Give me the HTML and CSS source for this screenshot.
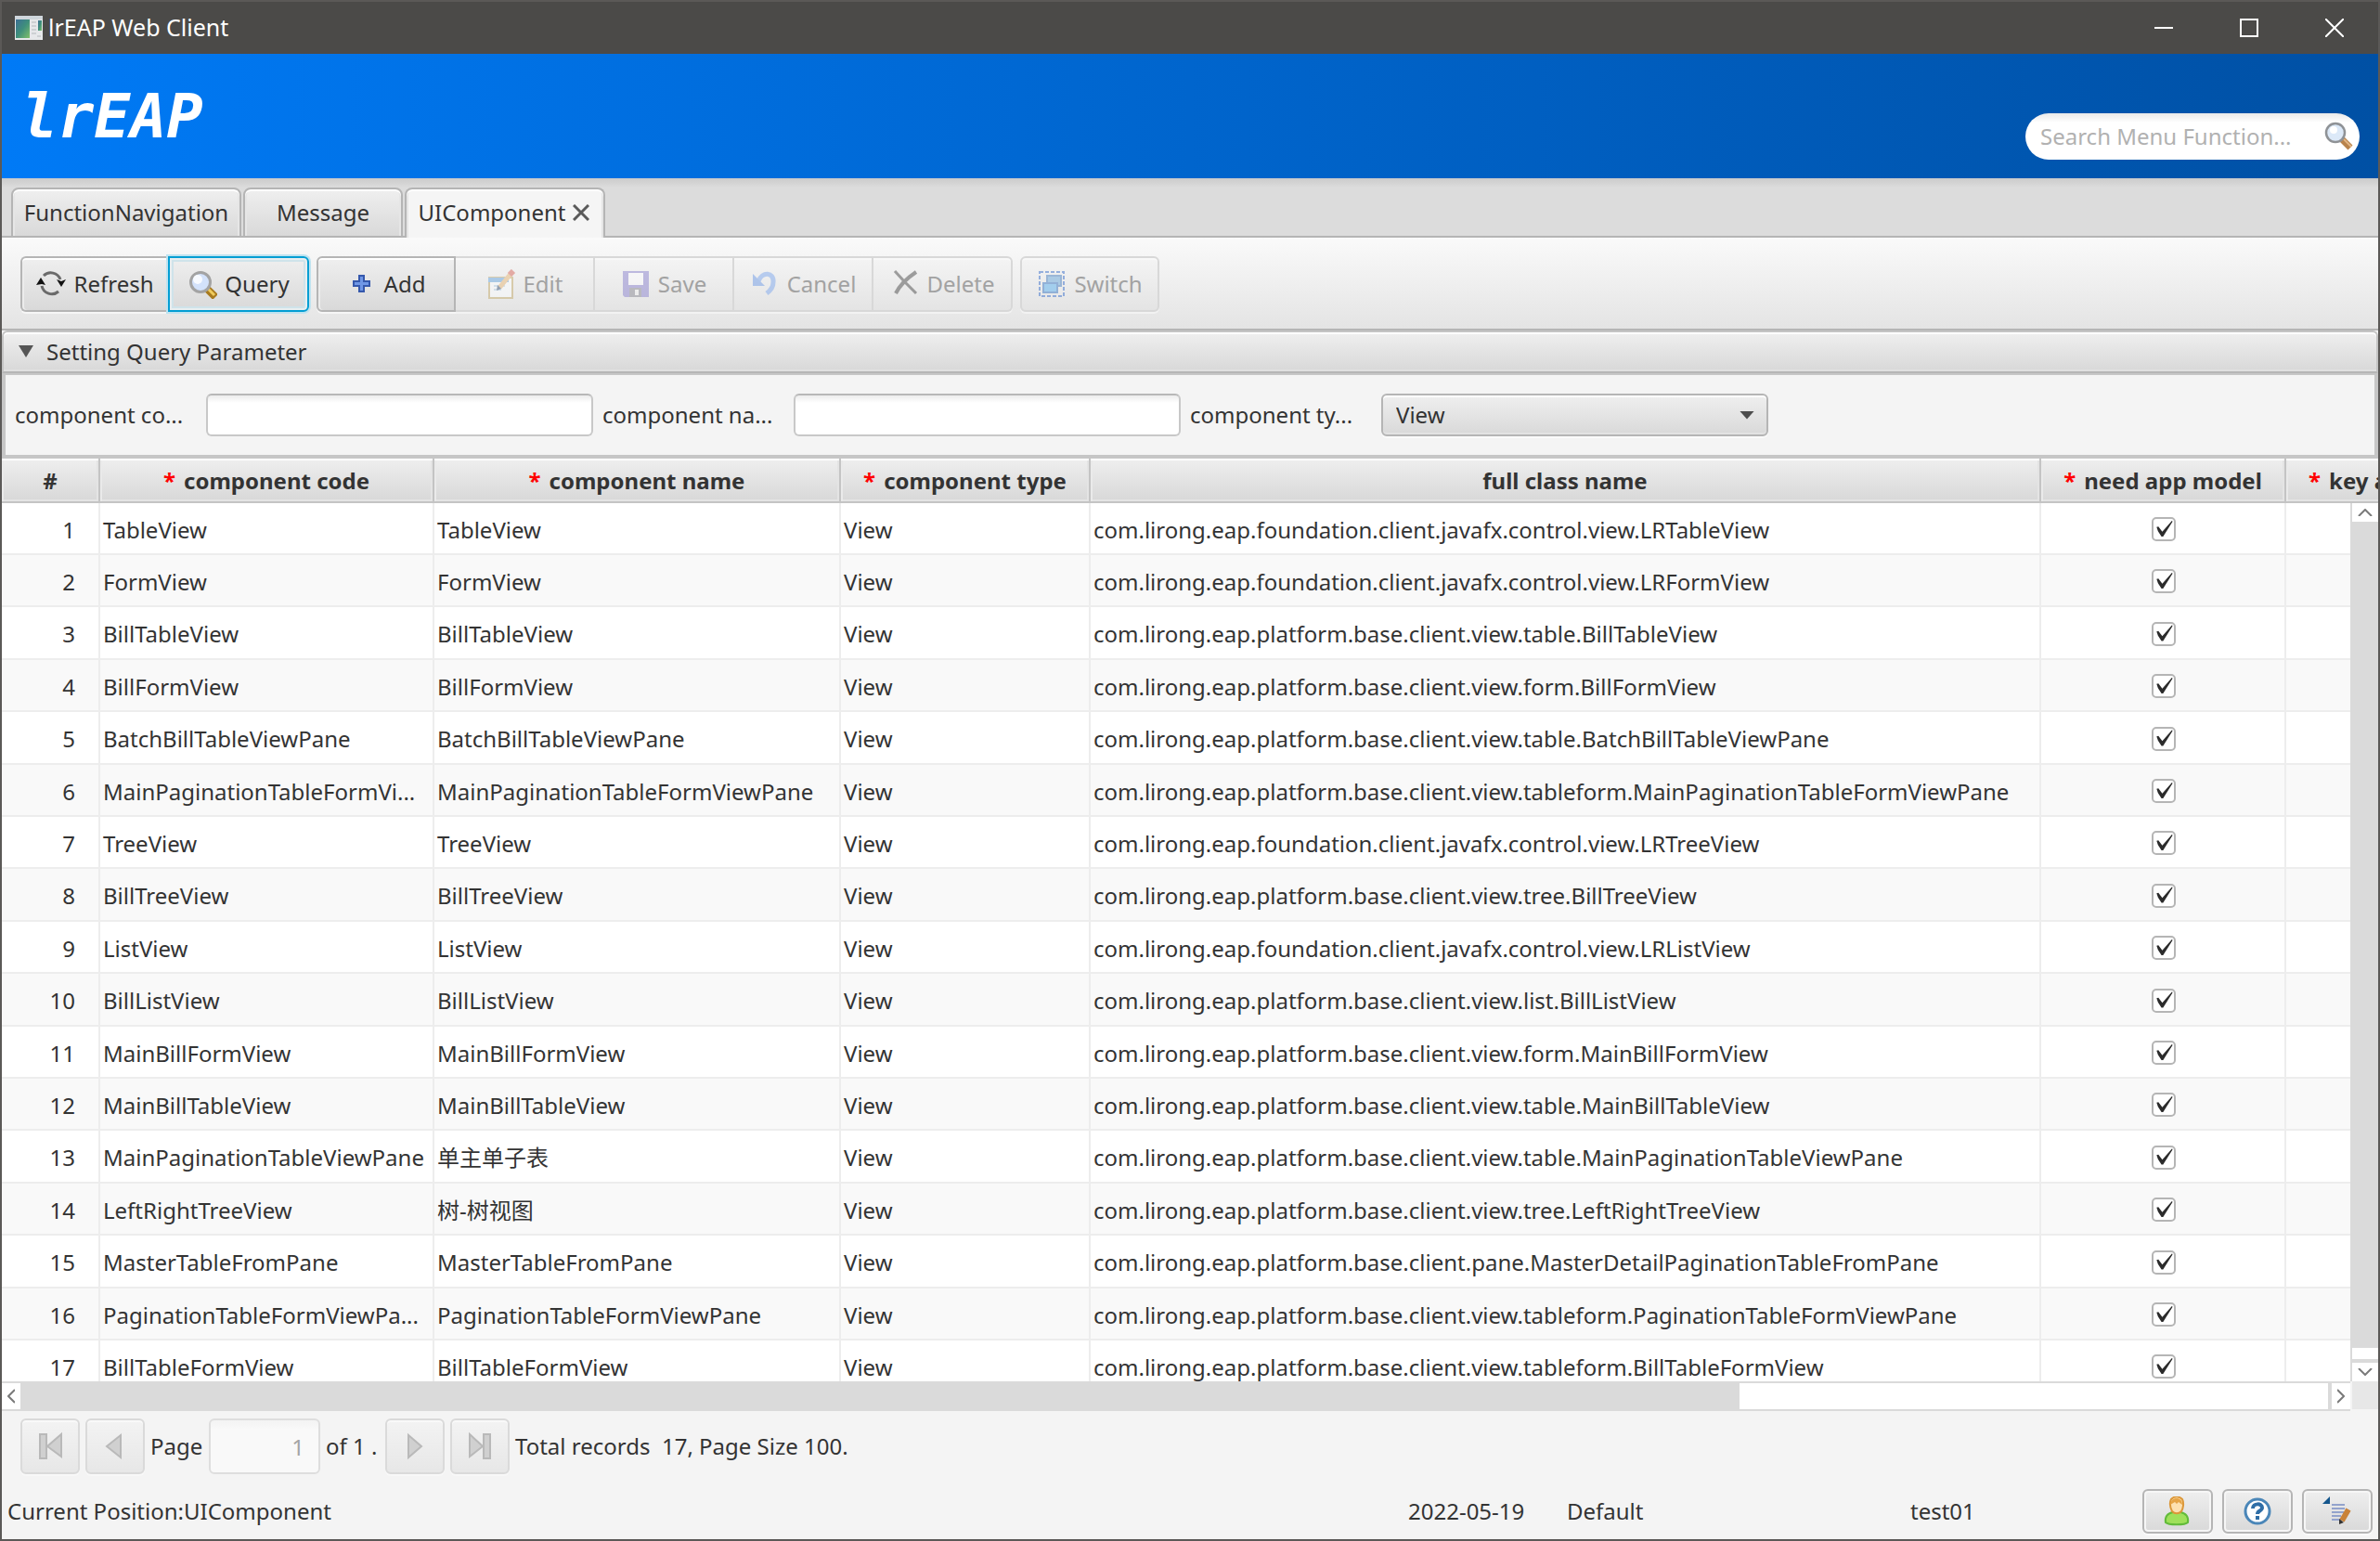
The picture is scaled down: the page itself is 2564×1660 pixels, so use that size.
FILE: index.html
```html
<!DOCTYPE html>
<html lang="en">
<head>
<meta charset="utf-8">
<title>lrEAP Web Client</title>
<link rel="stylesheet" href="styles.css">
</head>
<body>
<div class="window">
  <header class="titlebar">
    <svg class="app-icon" viewBox="0 0 30 26" aria-hidden="true">
      <defs><linearGradient id="g-app" x1="0" y1="0" x2="1" y2="1"><stop offset="0" stop-color="#3c6f96"/><stop offset=".5" stop-color="#3f8f7c"/><stop offset="1" stop-color="#7fc06a"/></linearGradient></defs>
      <rect width="30" height="26" fill="#e6e8ea"/><rect x="0" y="0" width="30" height="4" fill="#cfd6dc"/>
      <rect x="1" y="4" width="15" height="20" fill="url(#g-app)"/>
      <path d="M18 7h5M18 11h5M18 15h5M18 19h5M24 22h4" stroke="#b4b8bc" stroke-width="1"/>
      <rect x="25" y="5" width="4" height="11" fill="url(#g-app)"/>
    </svg>
    <h1 class="titlebar-text">lrEAP Web Client</h1>
    <button class="win-btn" aria-label="Minimize"><svg viewBox="0 0 20 20"><path d="M0 10h20" /></svg></button>
    <button class="win-btn" aria-label="Maximize"><svg viewBox="0 0 20 20"><path d="M1 1h18v18H1z"/></svg></button>
    <button class="win-btn" aria-label="Close"><svg viewBox="0 0 20 20"><path d="M0 0l20 20M20 0L0 20"/></svg></button>
  </header>

  <div class="banner">
    <div class="brand">lrEAP</div>
    <div class="search">
      <input type="text" aria-label="Search Menu Function" placeholder="Search Menu Function...">
      <svg viewBox="0 0 32 32" aria-hidden="true">
        <path d="M19 19l9 9" stroke="#b8834c" stroke-width="7"/><path d="M21 19l8 8" stroke="#e0b483" stroke-width="2"/>
        <circle cx="12" cy="12" r="10" fill="#dce9f8" stroke="#8f9296" stroke-width="2.500"/><circle cx="10" cy="9" r="4" fill="#fff"/>
      </svg>
    </div>
  </div>

  <nav class="tabs" role="tablist">
    <button class="tab tab-nav" role="tab">FunctionNavigation</button>
    <button class="tab tab-msg" role="tab">Message</button>
    <button class="tab tab-ui selected" role="tab" aria-selected="true">UIComponent<svg viewBox="0 0 18 18" aria-hidden="true"><path d="M1 1l16 16M17 1L1 17"/></svg></button>
  </nav>

  <div class="toolbar" role="toolbar">
    <div class="btn-group">
      <button class="tool first refresh"><svg class="ico" viewBox="0 0 32 32" aria-hidden="true"><path d="M8 7A11 11 0 0 1 26 11" fill="none" stroke="#6a6a6a" stroke-width="3"/><path d="M24 24A11 11 0 0 1 6 18" fill="none" stroke="#6a6a6a" stroke-width="3"/><path d="M0 17L5 9l5 8-4-1z" fill="#111"/><path d="M22 11l5 2 5-2-5 8z" fill="#111"/></svg>Refresh</button>
      <button class="tool last query focused"><svg class="ico" viewBox="0 0 32 32" aria-hidden="true"><path d="M21 21l9 9" stroke="#a87a1e" stroke-width="8"/><path d="M22 21l7 7" stroke="#f0cc5c" stroke-width="3"/><circle cx="14" cy="14" r="10.500" fill="#d3e2fb" stroke="#a3a3a3" stroke-width="3"/><circle cx="11" cy="11" r="5" fill="#f7faff"/></svg>Query</button>
    </div>
    <div class="btn-group">
      <button class="tool first"><svg class="ico" viewBox="0 0 32 32" aria-hidden="true"><path d="M13 7h5v6h6v5h-6v6h-5v-6H7v-5h6z" fill="#6f97e6" stroke="#3558ac" stroke-width="2"/></svg>Add</button>
      <button class="tool" disabled><svg class="ico" viewBox="0 0 32 32" aria-hidden="true"><rect x="3" y="9" width="25" height="22" fill="#fbfdff" stroke="#c4ab6c" stroke-width="2"/><path d="M2 9h22v5H2z" fill="#6aa6e0"/><path d="M8 18h12M8 22h8" stroke="#b9d3ea" stroke-width="2"/><path d="M14 20L27 4" stroke="#e8b878" stroke-width="5"/><path d="M25 6l4-4" stroke="#d8685c" stroke-width="6"/><path d="M11 23l1-6 4 4z" fill="#3b5578"/></svg>Edit</button>
      <button class="tool" disabled><svg class="ico" viewBox="0 0 32 32" aria-hidden="true"><path d="M2 2h28v28H4l-2-2z" fill="#8c84d0"/><rect x="8" y="4" width="16" height="13" fill="#fdfdff"/><rect x="9" y="20" width="13" height="10" fill="#8a8a94"/><rect x="15" y="22" width="4" height="6" fill="#f0f0f0"/></svg>Save</button>
      <button class="tool" disabled><svg class="ico" viewBox="0 0 32 32" aria-hidden="true"><path d="M9 13c4-11 17-10 16 1 0 6-3 9-7 12" fill="none" stroke="#7fa9ee" stroke-width="5"/><path d="M3 5v13h13z" fill="#6f9ce8"/></svg>Cancel</button>
      <button class="tool last" disabled><svg class="ico" viewBox="0 0 32 32" aria-hidden="true"><path d="M5 2l10 11 2 2 11 11" fill="none" stroke="#4c4c4c" stroke-width="3"/><path d="M28 3C19 9 10 18 6 26" fill="none" stroke="#4c4c4c" stroke-width="4"/></svg>Delete</button>
    </div>
    <div class="btn-group">
      <button class="tool first last" disabled><svg class="ico" viewBox="0 0 32 32" aria-hidden="true"><rect x="3" y="3" width="26" height="26" fill="none" stroke="#3c70cc" stroke-width="2" stroke-dasharray="4 2"/><rect x="11" y="7" width="15" height="11" fill="#6aa8dc" stroke="#4a80c0" stroke-width="2"/><rect x="7" y="15" width="15" height="10" fill="#5cb2f0" stroke="#3c78c4" stroke-width="2"/></svg>Switch</button>
    </div>
  </div>

  <section class="params">
    <h2 class="params-title"><svg viewBox="0 0 16 14" aria-hidden="true"><path d="M0 0h16L8 13z"/></svg>Setting Query Parameter</h2>
    <form class="params-body">
      <label for="p-code">component co...</label><input id="p-code" type="text">
      <label for="p-name">component na...</label><input id="p-name" type="text">
      <label for="p-type">component ty...</label><span class="combo"><select id="p-type"><option>View</option></select></span>
    </form>
  </section>

  <main class="datagrid">
    <div class="viewport">
      <table>
        <colgroup><col class="c-num"><col class="c-code"><col class="c-name"><col class="c-type"><col class="c-class"><col class="c-need"><col class="c-key"></colgroup>
        <thead>
          <tr><th>#</th><th><i>*</i>component code</th><th><i>*</i>component name</th><th><i>*</i>component type</th><th>full class name</th><th><i>*</i>need app model</th><th class="start"><i>*</i>key a</th></tr>
        </thead>
        <tbody>
          <tr><td>1</td><td>TableView</td><td>TableView</td><td>View</td><td>com.lirong.eap.foundation.client.javafx.control.view.LRTableView</td><td><input type="checkbox" checked aria-label="need app model, row 1"></td><td></td></tr>
          <tr><td>2</td><td>FormView</td><td>FormView</td><td>View</td><td>com.lirong.eap.foundation.client.javafx.control.view.LRFormView</td><td><input type="checkbox" checked aria-label="need app model, row 2"></td><td></td></tr>
          <tr><td>3</td><td>BillTableView</td><td>BillTableView</td><td>View</td><td>com.lirong.eap.platform.base.client.view.table.BillTableView</td><td><input type="checkbox" checked aria-label="need app model, row 3"></td><td></td></tr>
          <tr><td>4</td><td>BillFormView</td><td>BillFormView</td><td>View</td><td>com.lirong.eap.platform.base.client.view.form.BillFormView</td><td><input type="checkbox" checked aria-label="need app model, row 4"></td><td></td></tr>
          <tr><td>5</td><td>BatchBillTableViewPane</td><td>BatchBillTableViewPane</td><td>View</td><td>com.lirong.eap.platform.base.client.view.table.BatchBillTableViewPane</td><td><input type="checkbox" checked aria-label="need app model, row 5"></td><td></td></tr>
          <tr><td>6</td><td>MainPaginationTableFormVi...</td><td>MainPaginationTableFormViewPane</td><td>View</td><td>com.lirong.eap.platform.base.client.view.tableform.MainPaginationTableFormViewPane</td><td><input type="checkbox" checked aria-label="need app model, row 6"></td><td></td></tr>
          <tr><td>7</td><td>TreeView</td><td>TreeView</td><td>View</td><td>com.lirong.eap.foundation.client.javafx.control.view.LRTreeView</td><td><input type="checkbox" checked aria-label="need app model, row 7"></td><td></td></tr>
          <tr><td>8</td><td>BillTreeView</td><td>BillTreeView</td><td>View</td><td>com.lirong.eap.platform.base.client.view.tree.BillTreeView</td><td><input type="checkbox" checked aria-label="need app model, row 8"></td><td></td></tr>
          <tr><td>9</td><td>ListView</td><td>ListView</td><td>View</td><td>com.lirong.eap.foundation.client.javafx.control.view.LRListView</td><td><input type="checkbox" checked aria-label="need app model, row 9"></td><td></td></tr>
          <tr><td>10</td><td>BillListView</td><td>BillListView</td><td>View</td><td>com.lirong.eap.platform.base.client.view.list.BillListView</td><td><input type="checkbox" checked aria-label="need app model, row 10"></td><td></td></tr>
          <tr><td>11</td><td>MainBillFormView</td><td>MainBillFormView</td><td>View</td><td>com.lirong.eap.platform.base.client.view.form.MainBillFormView</td><td><input type="checkbox" checked aria-label="need app model, row 11"></td><td></td></tr>
          <tr><td>12</td><td>MainBillTableView</td><td>MainBillTableView</td><td>View</td><td>com.lirong.eap.platform.base.client.view.table.MainBillTableView</td><td><input type="checkbox" checked aria-label="need app model, row 12"></td><td></td></tr>
          <tr><td>13</td><td>MainPaginationTableViewPane</td><td lang="zh">单主单子表</td><td>View</td><td>com.lirong.eap.platform.base.client.view.table.MainPaginationTableViewPane</td><td><input type="checkbox" checked aria-label="need app model, row 13"></td><td></td></tr>
          <tr><td>14</td><td>LeftRightTreeView</td><td lang="zh">树-树视图</td><td>View</td><td>com.lirong.eap.platform.base.client.view.tree.LeftRightTreeView</td><td><input type="checkbox" checked aria-label="need app model, row 14"></td><td></td></tr>
          <tr><td>15</td><td>MasterTableFromPane</td><td>MasterTableFromPane</td><td>View</td><td>com.lirong.eap.platform.base.client.pane.MasterDetailPaginationTableFromPane</td><td><input type="checkbox" checked aria-label="need app model, row 15"></td><td></td></tr>
          <tr><td>16</td><td>PaginationTableFormViewPa...</td><td>PaginationTableFormViewPane</td><td>View</td><td>com.lirong.eap.platform.base.client.view.tableform.PaginationTableFormViewPane</td><td><input type="checkbox" checked aria-label="need app model, row 16"></td><td></td></tr>
          <tr><td>17</td><td>BillTableFormView</td><td>BillTableFormView</td><td>View</td><td>com.lirong.eap.platform.base.client.view.tableform.BillTableFormView</td><td><input type="checkbox" checked aria-label="need app model, row 17"></td><td></td></tr>
        </tbody>
      </table>
    </div>
    <div class="vbar">
      <button aria-label="Scroll up"><svg viewBox="0 0 16 8"><path d="M1 8l7-7 7 7"/></svg></button>
      <div class="vthumb"></div><div class="vtrack"></div>
      <button aria-label="Scroll down"><svg viewBox="0 0 16 8"><path d="M1 0l7 7 7-7"/></svg></button>
    </div>
    <div class="hbar">
      <button aria-label="Scroll left"><svg viewBox="0 0 8 16"><path d="M8 1L1 8l7 7"/></svg></button>
      <div class="hthumb"></div><div class="htrack"></div>
      <button aria-label="Scroll right"><svg viewBox="0 0 8 16"><path d="M0 1l7 7-7 7"/></svg></button>
    </div>
    <div class="corner"></div>
  </main>

  <div class="pager">
    <button class="page-btn" disabled aria-label="First page"><svg class="ico" viewBox="0 0 32 32"><path d="M5 3h7v26H5zM28 3v24L13 16z"/></svg></button>
    <button class="page-btn" disabled aria-label="Previous page"><svg class="ico" viewBox="0 0 32 32"><path d="M22 4v24L7 16z"/></svg></button>
    <label class="page-label" for="page">Page</label>
    <input id="page" type="text" value="1" disabled>
    <span class="page-count">of 1 .</span>
    <button class="page-btn" disabled aria-label="Next page"><svg class="ico" viewBox="0 0 32 32"><path d="M9 4v24l14-12z"/></svg></button>
    <button class="page-btn" disabled aria-label="Last page"><svg class="ico" viewBox="0 0 32 32"><path d="M20 3h7v26h-7zM5 3v24l14-11z"/></svg></button>
    <span class="totals">Total records&nbsp; 17, Page Size 100.</span>
  </div>

  <footer class="status">
    <span class="position">Current Position:UIComponent</span>
    <span class="date">2022-05-19</span>
    <span class="org">Default</span>
    <span class="user">test01</span>
    <div class="status-btns">
      <button aria-label="User"><svg class="ico" viewBox="0 0 32 32"><path d="M3 28c-1-6 2-10 8-11h8c6 1 9 5 8 11-3 3-21 3-24 0z" fill="#9fe05a" stroke="#62bb3a" stroke-width="2"/><path d="M9 3c4-4 9-3 12 0 2 4 1 10-1 13-3 3-7 3-10 0-2-4-3-9-1-13z" fill="#fde0b0" stroke="#dc9738" stroke-width="2"/><path d="M8 9c1-6 4-7 7-7s6 2 6 7l-4-3-2 2-2-2z" fill="#e6a446"/></svg></button>
      <button aria-label="Help"><svg class="ico" viewBox="0 0 32 32"><circle cx="16" cy="16" r="13" fill="#fff" stroke="#4a86b8" stroke-width="3"/><path d="M11 13c0-6 10-6 10-1 0 4-5 3-5 7" fill="none" stroke="#2f6ea6" stroke-width="4"/><rect x="14" y="21" width="4" height="4" fill="#2f6ea6"/></svg></button>
      <button aria-label="Log"><svg class="ico" viewBox="0 0 32 32"><path d="M8 0v8H0z" fill="#14568c"/><path d="M10 9h14M10 13h14M10 17h13M10 21h10M10 25h8" stroke="#93a3cc" stroke-width="2"/><path d="M21 26l7-12" stroke="#c98238" stroke-width="6"/><path d="M18 30v-6l5 4z" fill="#333"/></svg></button>
    </div>
  </footer>
</div>
</body>
</html>
```
FILE: styles.css
```css
* { box-sizing: border-box; }

body { margin: 0; }

body, button, input, select {
  font-family: "Noto Sans", "Noto Sans CJK SC", sans-serif;
  font-size: 24px;
  line-height: 32px;
  color: #333;
}

button, input, select { margin: 0; padding: 0; border: 0; border-radius: 0; background: none; }
h1, h2 { margin: 0; font-weight: 400; font-size: 24px; }
svg { display: block; flex: none; }
.ico { width: 32px; height: 32px; }

.window {
  display: flex;
  flex-direction: column;
  height: 100vh;
  border: 2px solid #5b5957;
  background: #f4f4f4;
  overflow: hidden;
  white-space: nowrap;
}

/* title bar */
.titlebar { display: flex; align-items: center; height: 56px; flex: none; padding-left: 14px; background: #4b4a48; }
.app-icon { width: 30px; height: 26px; }
.titlebar-text { flex: 1; padding: 0 0 2px 6px; font-size: 25px; color: #fff; }
.win-btn { display: grid; place-items: center; width: 92px; height: 56px; padding-right: 2px; }
.win-btn svg { width: 20px; height: 20px; fill: none; stroke: #fff; stroke-width: 2px; }

/* banner */
.banner {
  display: flex;
  justify-content: space-between;
  align-items: center;
  height: 134px;
  flex: none;
  padding: 0 20px 0 21px;
  background: linear-gradient(90deg, #007af6, #0050a4);
}
.brand { padding-top: 2px; font: italic 700 65px/64px "DejaVu Sans Mono", monospace; color: #fff; }
.search {
  display: flex;
  align-items: center;
  width: 360px;
  height: 50px;
  margin-top: 44px;
  padding: 0 6px 0 16px;
  border-radius: 25px;
  background: linear-gradient(#e9e9e9, #fff 10px);
}
.search input { flex: 1; min-width: 0; outline: 0; }
.search input::placeholder { color: #b1b1b1; opacity: 1; }
.search svg { width: 32px; height: 32px; }

/* tabs */
.tabs {
  display: flex;
  gap: 2px;
  height: 64px;
  flex: none;
  padding: 10px 10px 0;
  border-bottom: 2px solid #b5b5b5;
  background: linear-gradient(#cbcbcb, #dcdcdc 10px);
}
.tab {
  height: 54px;
  border: 2px solid #b5b5b5;
  border-radius: 8px 8px 0 0;
  background: linear-gradient(#efefef, #d9d9d9);
  box-shadow: inset 0 2px #fff, inset 2px 0 #e6e6e6, inset -2px 0 #e6e6e6;
}
.tab-nav { width: 248px; }
.tab-msg { width: 172px; }
.tab-ui { width: 216px; display: flex; align-items: center; justify-content: center; gap: 8px; }
.tab svg { width: 18px; height: 18px; fill: none; stroke: #5a5a5a; stroke-width: 3px; }
.tab.selected { padding: 0 2px 2px 0; border-bottom: 0; background: #f5f5f5; }

/* toolbar */
.toolbar {
  display: flex;
  gap: 8px;
  height: 100px;
  flex: none;
  padding: 20px 20px 0;
  border-bottom: 2px solid #b5b5b5;
  background: linear-gradient(#fafafa, #e4e4e4);
}
.btn-group { display: flex; }
.tool {
  display: flex;
  align-items: center;
  justify-content: center;
  gap: 8px;
  width: 150px;
  height: 60px;
  border: 2px solid #b5b5b5;
  background: linear-gradient(#efefef, #d9d9d9);
  box-shadow: inset 0 2px #fff, inset 2px 0 #ececec, 0 2px #f6f6f6;
}
.tool.first { border-radius: 6px 0 0 6px; }
.tool.last { border-radius: 0 6px 6px 0; }
.tool.first.last { border-radius: 6px; }
.tool.refresh { width: 159px; border-right: 0; }
.tool.query { width: 152px; }
.tool.focused {
  border-color: #039ed3;
  box-shadow: 0 0 0 2px #bfe3f0, inset 0 0 0 2px #e8eef0, inset 0 0 0 4px #cfe3ea;
}
.tool:disabled {
  border-left-width: 0;
  border-color: #d8d8d8;
  background: linear-gradient(#f4f4f4, #e4e4e4);
  box-shadow: inset 0 2px #f8f8f8, 0 2px #f2f2f2;
  color: #a2a2a2;
}
.tool.first:disabled { border-left-width: 2px; }
.tool:disabled .ico { opacity: .5; }

/* query parameters */
.params { flex: none; }
.params-title {
  display: flex;
  align-items: center;
  gap: 14px;
  height: 46px;
  padding-left: 16px;
  border: 2px solid #c4c4c4;
  border-bottom-color: #b5b5b5;
  border-radius: 6px 6px 0 0;
  background: linear-gradient(#efefef, #d8d8d8);
  box-shadow: inset 0 2px #fff, inset 0 -2px #e0e0e0;
}
.params-title svg { width: 16px; height: 14px; fill: #555; }
.params-body {
  display: flex;
  align-items: flex-start;
  height: 92px;
  padding: 20px 10px 0;
  border: solid #c6c6c6;
  border-width: 2px 4px 4px;
}
.params-body label { width: 206px; padding-top: 7px; }
.params-body input {
  width: 417px;
  height: 46px;
  margin-right: 10px;
  padding: 0 12px;
  border: 2px solid #c8c8c8;
  border-top-color: #b8b8b8;
  border-radius: 6px;
  background: linear-gradient(#ececec, #fff 8px);
}
.combo { display: grid; width: 417px; height: 46px; }
.combo select {
  grid-area: 1 / 1;
  appearance: none;
  padding-left: 14px;
  border: 2px solid #b5b5b5;
  border-radius: 6px;
  background: linear-gradient(#efefef, #d9d9d9);
  box-shadow: inset 0 2px #fff, inset 0 -2px #e2e2e2, 0 2px #fafafa;
}
.combo::after {
  content: "";
  grid-area: 1 / 1;
  place-self: center end;
  width: 16px;
  height: 9px;
  margin-right: 15px;
  background: #4d4d4d;
  clip-path: polygon(0 0, 100% 0, 50% 100%);
  pointer-events: none;
}

/* data grid */
.datagrid {
  display: grid;
  grid-template: 48px minmax(0, 1fr) 32px / minmax(0, 1fr) 30px;
  flex: 1;
  min-height: 0;
}
.viewport { grid-area: 1 / 1 / 3 / 3; overflow: hidden; background: #fff; }
table { width: 2761px; table-layout: fixed; border-spacing: 0; }
.c-num { width: 106px; }
.c-code { width: 360px; }
.c-name { width: 438px; }
.c-type { width: 269px; }
.c-class { width: 1024px; }
.c-need { width: 264px; }
.c-key { width: 300px; }
th {
  height: 48px;
  padding: 1px 0 0;
  border: solid #c4c4c4;
  border-width: 0 2px 2px 0;
  background: linear-gradient(#efefef, #d8d8d8);
  box-shadow: inset 0 2px #fff, inset 2px 0 #eaeaea, inset -2px -2px #e4e4e4;
}
th i { margin-right: 9px; color: #f00; font-style: normal; }
th.start { padding-left: 24px; text-align: left; }
td {
  height: 56px;
  padding: 3px 0 0 3px;
  border: solid #ededed;
  border-width: 0 2px 2px 0;
  overflow: hidden;
}
tr:nth-child(5n+3) td, tr:nth-child(5n+5) td { height: 57px; }
tbody tr:nth-child(even) { background: #f9f9f9; }
td:first-child { padding-right: 25px; text-align: right; }
td:nth-child(6) { padding: 2px 0 0 2px; }
td input {
  display: block;
  appearance: none;
  width: 26px;
  height: 26px;
  margin: 0 auto;
  border: 2px solid #b5b5b5;
  border-radius: 5px;
  background: #fff;
}
td input:checked::after {
  content: "";
  display: block;
  width: 22px;
  height: 22px;
  background: #2b2b2b;
  clip-path: polygon(15% 40%, 24% 37%, 43% 62%, 91% 8%, 93% 14%, 47% 86%, 39% 86%, 22% 60%);
}

/* scroll bars */
.vbar button, .hbar button { display: grid; place-items: center; flex: none; background: #fff; }
.vbar svg, .hbar svg { fill: none; stroke: #7a7a7a; stroke-width: 2px; }
.vbar { grid-area: 2 / 2; display: flex; flex-direction: column; border-left: 2px solid #dadada; background: #dadada; }
.vbar button { height: 20px; }
.vbar svg { width: 16px; height: 8px; }
.vthumb { flex: 890; }
.vtrack { flex: 12; margin-bottom: 4px; background: #fff; }
.hbar { grid-area: 3 / 1; display: flex; border: solid #dadada; border-width: 2px 0; background: #dadada; }
.hbar button { width: 20px; }
.hbar svg { width: 8px; height: 16px; }
.hthumb { flex: 1852; }
.htrack { flex: 634; margin-right: 4px; background: #fff; }
.corner { grid-area: 3 / 2; margin: 0 0 2px 2px; background: #e7e7e7; }

/* pager */
.pager { display: flex; align-items: center; flex: none; gap: 6px; padding: 8px 20px 10px; }
.page-btn {
  display: grid;
  place-items: center;
  width: 64px;
  height: 60px;
  border: 2px solid #dadada;
  border-radius: 6px;
  background: linear-gradient(#f3f3f3, #e7e7e7);
  box-shadow: inset 0 2px #f9f9f9, 0 2px #f8f8f8;
}
.page-btn svg { fill: #d0d0d0; stroke: #b9b9b9; stroke-width: 2px; }
.page-label { width: 57px; }
.page-count { width: 58px; }
.pager input {
  width: 120px;
  height: 60px;
  padding-right: 15px;
  border: 2px solid #dedede;
  border-radius: 6px;
  background: linear-gradient(#f3f3f3, #f9f9f9 10px);
  color: #a4a4a4;
  text-align: right;
}

/* status bar */
.status { display: flex; align-items: center; flex: none; height: 60px; padding: 0 6px; }
.position { flex: 1; }
.date { width: 171px; }
.org { width: 370px; }
.user { width: 250px; }
.status-btns { display: flex; gap: 10px; }
.status-btns button {
  display: grid;
  place-items: center;
  width: 76px;
  height: 48px;
  border: 2px solid #b5b5b5;
  border-radius: 6px;
  background: linear-gradient(#efefef, #d9d9d9);
  box-shadow: inset 0 0 0 2px #f6f6f6, 0 2px #fafafa;
}
```
